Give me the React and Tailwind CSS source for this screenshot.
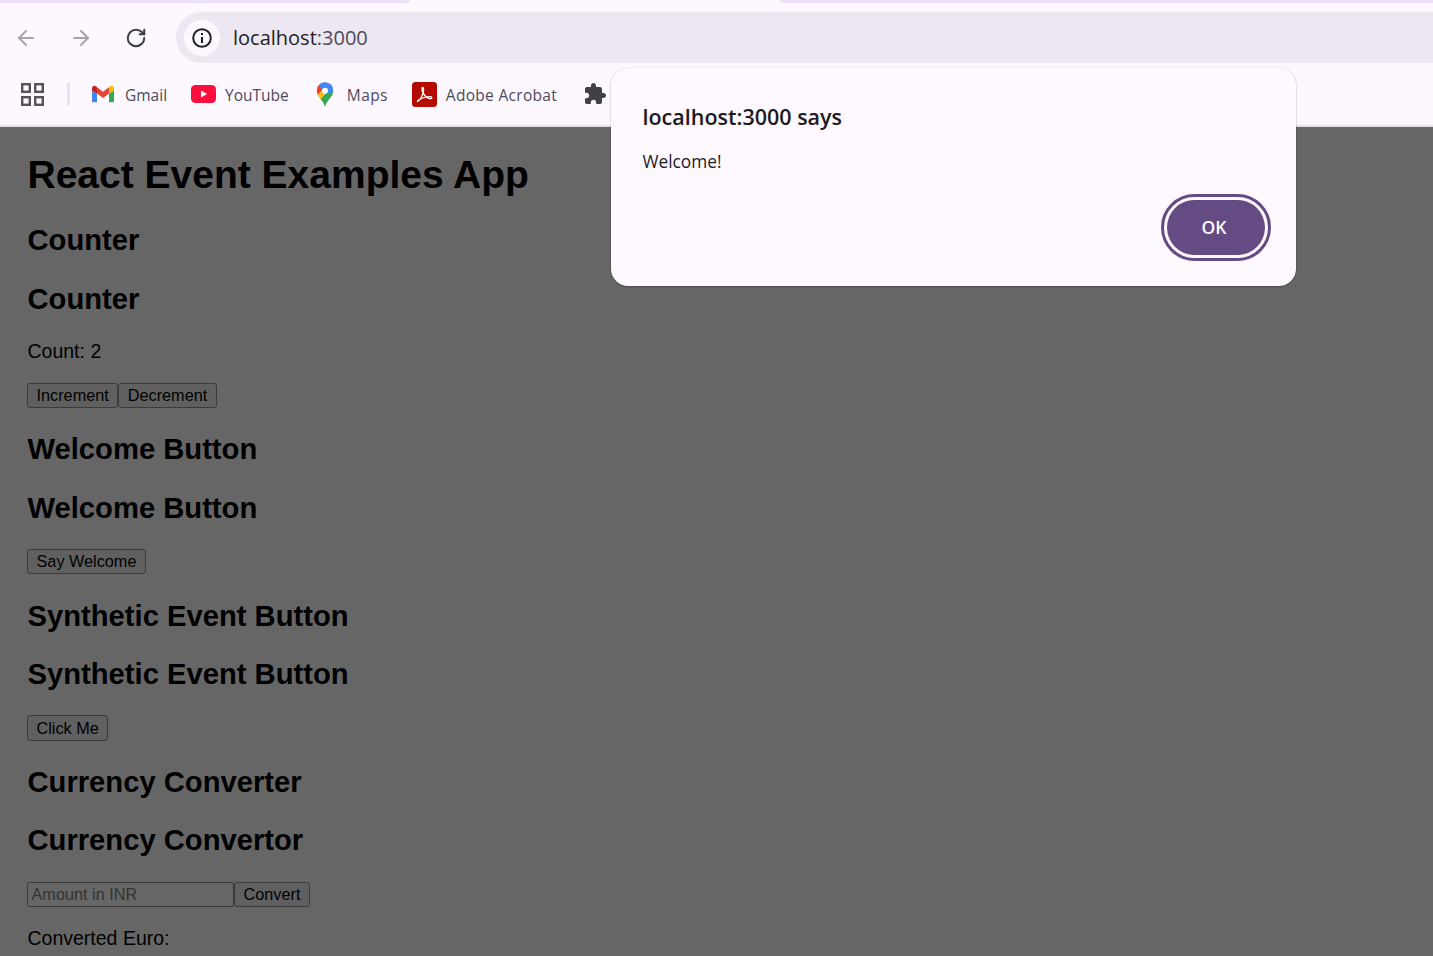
import { useState } from 'react';
import { ArrowLeft, ArrowRight, RotateCw } from 'lucide-react';

const chromeFont = "[font-family:'Open_Sans','Noto_Sans',sans-serif]";

function GmailIcon() {
  return (
    <svg width="24" height="18" viewBox="0 0 24 18">
      <path d="M1 5.500V16a1.300 1.300 0 0 0 1.300 1.300H6V8.500z" fill="#4285f4" />
      <path d="M18 8.500v8.800h3.700A1.300 1.300 0 0 0 23 16V5.500z" fill="#34a853" />
      <path d="M18 2.200v6.300l5-3V3.200c0-2-2.300-3.200-4-1.900z" fill="#fbbc04" />
      <path d="M6 8.500V2.200L12 6.700l6-4.500v6.300l-6 4.500z" fill="#ea4335" />
      <path d="M1 3.200v2.300l5 3V2.200L5 1.300C3.300 0 1 1.200 1 3.200z" fill="#c5221f" />
    </svg>
  );
}

function YouTubeIcon() {
  return (
    <svg width="25" height="18" viewBox="0 0 25 18">
      <rect x="0" y="0" width="25" height="18" rx="4.500" fill="#fb0f3c" />
      <path d="M10 5.500 16 9l-6 3.500z" fill="#fff" />
    </svg>
  );
}

function MapsIcon() {
  return (
    <svg width="18" height="25" viewBox="0 0 18 25">
      <path d="M9 25c-1-3.500-2.600-5.600-4.500-8L13 8l4.200 1c0 3-1.200 4.700-3 7-1.900 2.400-4.200 5-5.200 9z" fill="#34a853" />
      <path d="M4.500 17C3.400 15.600 2.500 14.200 1.800 12.700L6 8.500l3 3z" fill="#fbbc04" />
      <path d="M3 2.700C1.500 4.200.8 6.500.8 9c0 1.300.4 2.600 1 3.700L8 6.500z" fill="#ea4335" />
      <path d="M3 2.700A8.200 8.200 0 0 1 9 .3c1.200 0 2.300.3 3.300.8L6 8z" fill="#4285f4" />
      <path d="M12.300 1.100a8.300 8.300 0 0 1 4.900 7.900L13 12 6 5z" fill="#4285f4" />
      <circle cx="9" cy="8.800" r="3" fill="#fff" />
    </svg>
  );
}

function AcrobatIcon() {
  return (
    <svg width="25" height="25" viewBox="0 0 25 25">
      <rect width="25" height="25" rx="3.500" fill="#b30b00" />
      <path
        d="M5.500 19.500c2.500-1.200 5-6 5.800-9.500.4-1.900.4-4.500-.6-4.500-1.100 0-.8 3.300.6 5.700 1.500 2.700 3.500 4.800 6 5.400 1.500.3 2.700-.1 2.500-1-.2-1-2.500-1.100-4.700-.8-3 .4-6.200 1.500-8 3-1.100.9-1.900 1.500-1.600 1.700z"
        fill="none"
        stroke="#fff"
        strokeWidth="1.300"
        strokeLinejoin="round"
      />
    </svg>
  );
}

function PuzzleIcon() {
  return (
    <svg className="ml-[26px]" width="24" height="24" viewBox="0 0 24 24" fill="#3f4146">
      <path d="M20.500 11H19V7c0-1.100-.9-2-2-2h-4V3.500C13 2.120 11.880 1 10.500 1S8 2.120 8 3.500V5H4c-1.100 0-1.990.9-1.990 2v3.800H3.500c1.490 0 2.700 1.210 2.700 2.700s-1.210 2.700-2.700 2.700H2V20c0 1.100.9 2 2 2h3.800v-1.500c0-1.490 1.210-2.700 2.700-2.700 1.490 0 2.700 1.210 2.700 2.700V22H17c1.100 0 2-.9 2-2v-4h1.500c1.380 0 2.500-1.120 2.500-2.500S21.880 11 20.500 11z" />
    </svg>
  );
}

function Bookmark({ icon, label, className, labelClass = '' }) {
  return (
    <div className={`flex items-center ${className}`}>
      {icon}
      <span className={`pt-[4px] text-[15.500px] leading-none text-[#4b4b59] ${labelClass}`}>{label}</span>
    </div>
  );
}

function BrowserBar() {
  return (
    <div className={`bg-[#fdf7ff] ${chromeFont}`}>
      {/* tab strip remainder */}
      <div className="flex h-[12px]">
        <div className="h-[3px] w-[410px] rounded-br-[6px] bg-[#ece0f8]" />
        <div className="h-[3px] flex-1" />
        <div className="h-[3px] w-[653px] rounded-bl-[6px] bg-[#ece0f8]" />
      </div>

      <div className="flex h-[51px] items-center">
        <div className="flex w-[176px] items-center text-[#a8a4ad]">
          <ArrowLeft size={24} strokeWidth={2} className="ml-[14px]" />
          <ArrowRight size={24} strokeWidth={2} className="ml-[31px]" />
          <RotateCw size={22} strokeWidth={2.2} className="ml-[32px] text-[#3f3d47]" />
        </div>
        <div className="flex h-[51px] flex-1 items-center rounded-l-[26px] bg-[#ece7f1] pl-[8px]">
          <div className="flex h-[36px] w-[36px] items-center justify-center rounded-full bg-[#fdf7ff]">
            <svg width="22" height="22" viewBox="0 0 22 22" fill="none" stroke="#1f1f24" strokeWidth="2">
              <circle cx="11" cy="11" r="8.800" />
              <path d="M11 10v6" />
              <path d="M11 6v2" />
            </svg>
          </div>
          <span className="ml-[13px] pt-[1px] text-[20px] leading-none text-[#1f1f24]">
            localhost<span className="text-[#4b4b59]">:3000</span>
          </span>
        </div>
      </div>

      <div className="flex h-[62px] items-center">
        <svg className="ml-[21px]" width="23" height="23" viewBox="0 0 23 23" fill="none" stroke="#55525a" strokeWidth="2.400">
          <rect x="1.200" y="1.200" width="7.600" height="7.600" />
          <rect x="14.200" y="1.200" width="7.600" height="7.600" />
          <rect x="1.200" y="14.200" width="7.600" height="7.600" />
          <rect x="14.200" y="14.200" width="7.600" height="7.600" />
        </svg>
        <div className="ml-[23px] h-[24px] w-[3px] rounded-full bg-[#ece0f8]" />
        <Bookmark icon={<GmailIcon />} label="Gmail" className="ml-[21px] gap-[10px]" />
        <Bookmark icon={<YouTubeIcon />} label="YouTube" className="ml-[24px] gap-[9px]" />
        <Bookmark icon={<MapsIcon />} label="Maps" className="ml-[27px] gap-[13px]" labelClass="tracking-[0.4px]" />
        <Bookmark icon={<AcrobatIcon />} label="Adobe Acrobat" className="ml-[24px] gap-[9px]" labelClass="tracking-[0.3px]" />
        <PuzzleIcon />
      </div>
      <div className="h-[2px] bg-[#e8e2ec]" />
    </div>
  );
}

function Heading({ children, mt = 'mt-[25px]' }) {
  return <h2 className={`${mt} text-[29.200px] leading-[34px] font-bold text-black`}>{children}</h2>;
}

function PageButton({ children, onClick, height = 'h-[25px]' }) {
  return (
    <button
      onClick={onClick}
      className={`${height} rounded-[3px] border border-[#3b3b3b] bg-[#606060] px-[8.500px] text-[16.250px] leading-none text-black`}
    >
      {children}
    </button>
  );
}

function AlertDialog() {
  return (
    <div
      className={`absolute top-[68px] left-[611px] h-[218px] w-[685px] rounded-[17px] bg-[#fef9ff] shadow-[0_1px_2px_rgba(0,0,0,0.25),0_0_2px_rgba(0,0,0,0.12)] ${chromeFont}`}
    >
      <div className="pt-[35px] pl-[31.500px] text-[21.500px] leading-[28px] font-semibold text-[#1b1b1f]">
        localhost:3000 says
      </div>
      <div className="mt-[19px] pl-[31.500px] text-[17.300px] leading-[24px] text-[#1b1b1f]">Welcome!</div>
      <div className="mt-[20px] flex justify-end pr-[25px]">
        <button className="h-[67px] w-[110px] rounded-full border-[3px] border-[#654b84] p-[3px]">
          <span className="flex h-full w-full items-center justify-center rounded-full bg-[#654b84] pr-[4px] text-[17.500px] font-semibold text-[#fef9ff]">
            OK
          </span>
        </button>
      </div>
    </div>
  );
}

function App() {
  const [count, setCount] = useState(2);

  return (
    <div className="relative h-[956px] w-full overflow-hidden bg-[#666666]">
      <BrowserBar />

      <main className="pt-[25px] pl-[27.500px] font-['Liberation_Sans',Arial,sans-serif] text-black">
        <h1 className="text-[39px] leading-[45px] font-bold">React Event Examples App</h1>

        <Heading mt="mt-[26px]">Counter</Heading>
        <Heading>Counter</Heading>
        <p className="mt-[24px] text-[19.500px] leading-[23px]">Count: {count}</p>
        <div className="mt-[20px] -ml-[0.500px] flex">
          <PageButton onClick={() => setCount(count + 1)}>Increment</PageButton>
          <PageButton onClick={() => setCount(count - 1)}>Decrement</PageButton>
        </div>

        <Heading mt="mt-[24px]">Welcome Button</Heading>
        <Heading>Welcome Button</Heading>
        <div className="mt-[24px] -ml-[0.500px] flex">
          <PageButton>Say Welcome</PageButton>
        </div>

        <Heading>Synthetic Event Button</Heading>
        <Heading mt="mt-[24px]">Synthetic Event Button</Heading>
        <div className="mt-[24px] -ml-[0.500px] flex">
          <PageButton height="h-[26px]">Click Me</PageButton>
        </div>

        <Heading mt="mt-[24px]">Currency Converter</Heading>
        <Heading mt="mt-[24px]">Currency Convertor</Heading>
        <div className="mt-[25px] -ml-[0.500px] flex">
          <input
            placeholder="Amount in INR"
            className="h-[25px] w-[207px] rounded-[2px] border border-[#3b3b3b] bg-[#666666] px-[3.500px] text-[16.250px] leading-none text-black outline-none placeholder:text-[#333333]"
          />
          <PageButton>Convert</PageButton>
        </div>
        <p className="mt-[19px] text-[19.500px] leading-[24px]">Converted Euro:</p>
      </main>

      <AlertDialog />
    </div>
  );
}

export default App;
